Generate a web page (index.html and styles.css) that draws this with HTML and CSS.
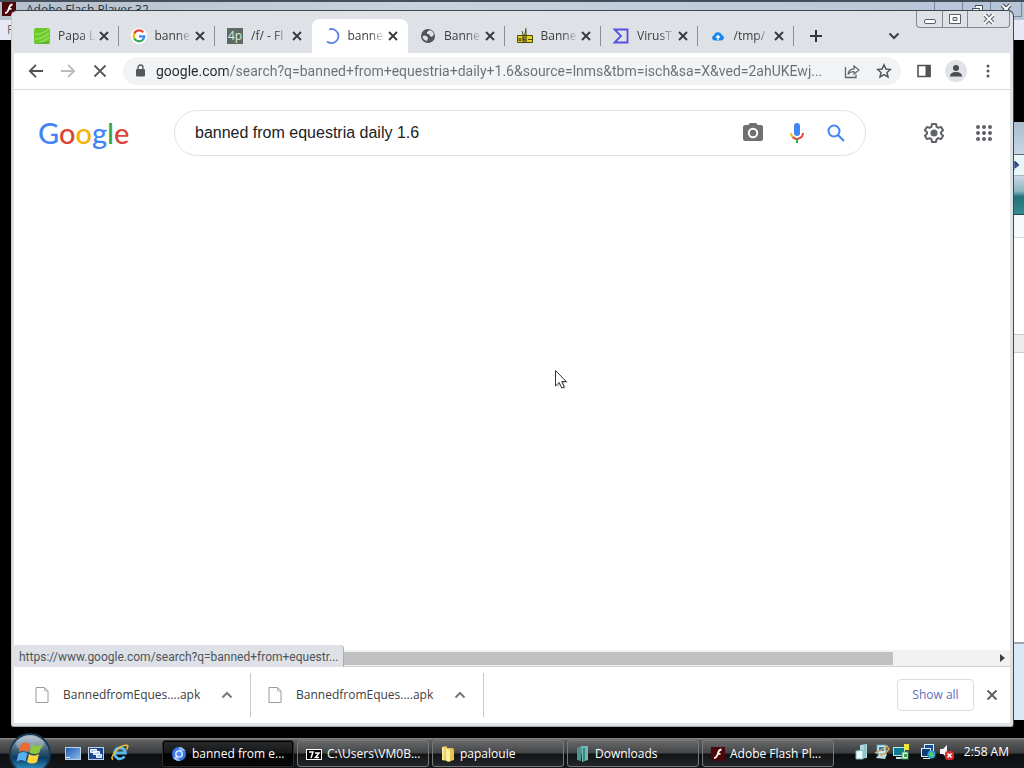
FILE: index.html
```html
<!DOCTYPE html>
<html lang="en">
<head>
<meta charset="utf-8">
<title>Desktop</title>
<link rel="stylesheet" href="styles.css">
</head>
<body>
<svg class="defs" aria-hidden="true">
  <defs>
    <linearGradient id="orb" x1="0" y1="0" x2="0" y2="1"><stop offset="0" stop-color="#a9bccb"/><stop offset=".45" stop-color="#35546c"/><stop offset=".6" stop-color="#0d3c63"/><stop offset="1" stop-color="#35b4e6"/></linearGradient>
    <linearGradient id="screen" x1="0" y1="0" x2="1" y2="1"><stop offset="0" stop-color="#1f55b0"/><stop offset="1" stop-color="#8cc0ef"/></linearGradient>
    <linearGradient id="folder" x1="0" y1="0" x2="1" y2="0"><stop offset="0" stop-color="#fff3a8"/><stop offset="1" stop-color="#dcb93c"/></linearGradient>
    <symbol id="close" viewBox="0 0 16 16"><path d="M4 4l8 8M12 4l-8 8" stroke="currentColor" stroke-width="1.8" fill="none"/></symbol>
    <symbol id="up" viewBox="0 0 16 16"><path d="M3.5 10.5L8 6l4.500 4.500" stroke="currentColor" stroke-width="2" fill="none"/></symbol>
    <symbol id="file" viewBox="0 0 16 18"><path d="M2 1.500h8.500l3.500 3.500v11.500H2z" fill="#fff" stroke="#9a9a9a"/><path d="M10.500 1.500v3.500H14" fill="none" stroke="#b5b5b5"/></symbol>
    <symbol id="flash" viewBox="0 0 14 14"><rect width="14" height="14" fill="#4a0609"/><path d="M10.500 2.500C7.500 2.500 7.500 5 6.700 7S5.500 11 3 11M6.500 6.800h3" stroke="#fff" stroke-width="1.800" fill="none"/></symbol>
  </defs>
</svg>

<div class="desktop">
  <main class="workspace">
    <section class="flash-window" aria-label="Adobe Flash Player 32">
      <div class="flash-title">
        <svg width="14" height="14"><use href="#flash"/></svg>
        <span class="flash-name">Adobe Flash Player 32</span>
        <span class="flash-buttons"><button aria-label="Minimize flash">
          <svg width="14" height="12"><rect x="2.500" y="7.500" width="9" height="3" fill="#fff" stroke="#444b55"/></svg></button><button aria-label="Restore flash">
          <svg width="14" height="12"><path d="M5.500 4V2.500h7v5H10M2.500 5.500h7v5h-7z" fill="#fff" stroke="#444b55"/></svg></button><button class="wide" aria-label="Close flash">
          <svg width="14" height="12"><path d="M3 2l8 8M11 2l-8 8" stroke="#444b55" stroke-width="4"/><path d="M3 2l8 8M11 2l-8 8" stroke="#fff" stroke-width="2"/></svg></button></span>
      </div>
      <div class="flash-menu">File</div>
    </section>

    <section class="explorer-window" aria-label="Downloads">
      <div class="ex-title"></div>
      <div class="ex-nav"><svg width="8" height="12"><path d="M0 3v8M0 4h3M1 2l4 4-4 3z" stroke="#34508f" fill="#34508f"/></svg></div>
      <div class="ex-teal"></div>
      <div class="ex-header"></div>
      <div class="ex-body"></div>
      <div class="ex-rule"></div>
      <div class="ex-list"></div>
      <div class="ex-details"></div>
    </section>

    <section class="browser" aria-label="Browser">
      <div class="window-buttons">
        <button aria-label="Minimize"><svg width="14" height="14"><rect x="1.500" y="7.500" width="11" height="4" rx="1.500" fill="#fff" stroke="#5a5e66"/></svg></button>
        <button aria-label="Maximize"><svg width="14" height="14"><path d="M1.500 2.500h11v9h-11zM5 5.500h4v3H5z" fill="#fff" fill-rule="evenodd" stroke="#5a5e66"/></svg></button>
        <button class="wide" aria-label="Close"><svg width="14" height="14"><path d="M3 3l8 8M11 3l-8 8" stroke="#5a5e66" stroke-width="4"/><path d="M2.500 2.500l9 9M11.500 2.500l-9 9" stroke="#fff" stroke-width="2"/></svg></button>
      </div>

      <div class="tabstrip">
        <div class="tabs">
          <div class="tab"><svg width="16" height="16"><rect width="16" height="16" rx="2" fill="#6cc92c"/><path d="M1 6q6 1 14-5M1 11q8 0 14-6M2 15q8-1 13-6" stroke="#98e05b" stroke-width="1.500" fill="none"/><path d="M1 15h14" stroke="#4da31a"/></svg><span class="label">Papa L</span><button aria-label="Close Papa Louie"><svg width="16" height="16"><use href="#close"/></svg></button></div>
          <div class="tab"><svg width="16" height="16"><circle cx="8" cy="8" r="8" fill="#fff"/><g fill="none" stroke-width="2.300"><path d="M12.200 4.200A5.300 5.300 0 0 0 3.300 5.500" stroke="#ea4335"/><path d="M3.300 5.500a5.300 5.300 0 0 0 0 5" stroke="#fbbc05"/><path d="M3.300 10.500a5.300 5.300 0 0 0 8.200 1.500" stroke="#34a853"/><path d="M11.500 12a5.300 5.300 0 0 0 1.800-3.700H8" stroke="#4285f4"/></g></svg><span class="label">banne</span><button aria-label="Close banned search"><svg width="16" height="16"><use href="#close"/></svg></button></div>
          <div class="tab no-rule"><span class="fourplebs">4p</span><span class="label">/f/ - Fl</span><button aria-label="Close /f/"><svg width="16" height="16"><use href="#close"/></svg></button></div>
          <div class="tab active"><svg width="16" height="16"><path d="M5 1.500a7 7 0 1 1-2 12" fill="none" stroke="#5f85dc" stroke-width="1.800"/></svg><span class="label">banne</span><button aria-label="Close current tab"><svg width="16" height="16"><use href="#close"/></svg></button></div>
          <div class="tab"><svg width="16" height="16"><circle cx="8" cy="8" r="7" fill="#50545a"/><path d="M2.500 8.500Q4 7 6 8t2 2l-1 3q-4-1-4.500-4.500zM7 4l3-2q3 1 4 4l-2 3-2-1-1-2-2 0z" fill="#dfe2e7"/></svg><span class="label">Banne</span><button aria-label="Close Banned"><svg width="16" height="16"><use href="#close"/></svg></button></div>
          <div class="tab"><svg width="16" height="16"><path d="M6 6L5 3M8 6l1-6M9 6V2" stroke="#4b4b24" fill="none"/><rect y="7" width="16" height="8" fill="#e3d51b"/><rect x="5" y="6" width="5" height="9" fill="#8b841d"/><path d="M.5 7.500h15v7H.5zM2 10.500h2v2H2zM11 11.500h4M6.500 9v3h3" stroke="#4d4812" fill="none"/></svg><span class="label">Banne</span><button aria-label="Close Banned page"><svg width="16" height="16"><use href="#close"/></svg></button></div>
          <div class="tab"><svg width="16" height="16"><path d="M1.500 1.500h13v13h-13L8 8z" fill="none" stroke="#5553dd" stroke-width="1.800"/></svg><span class="label">VirusT</span><button aria-label="Close VirusTotal"><svg width="16" height="16"><use href="#close"/></svg></button></div>
          <div class="tab"><svg width="16" height="16"><path d="M4.500 12.500a2.700 2.700 0 0 1-.4-5.300 4 4 0 0 1 7.700-.2 2.800 2.800 0 0 1-.3 5.500z" fill="#1688ee"/><path d="M8 12V8M6.200 9.500L8 7.700l1.800 1.800" stroke="#fff" stroke-width="1.300" fill="none"/></svg><span class="label">/tmp/</span><button aria-label="Close /tmp/"><svg width="16" height="16"><use href="#close"/></svg></button></div>
        </div>
        <button class="new-tab" aria-label="New tab"><svg width="16" height="16"><path d="M8 2v12M2 8h12" stroke="#33363a" stroke-width="2"/></svg></button>
        <button class="tab-search" aria-label="Search tabs"><svg width="16" height="16"><path d="M3.500 5.500L8 10l4.500-4.500" stroke="#3c4043" stroke-width="2" fill="none"/></svg></button>
      </div>

      <div class="toolbar">
        <button aria-label="Back"><svg width="16" height="16"><path d="M15 8H2.500M8 1.800L1.800 8 8 14.200" stroke="#4e5256" stroke-width="1.800" fill="none"/></svg></button>
        <button aria-label="Forward"><svg width="16" height="16"><path d="M1 8h12.500M8 1.800L14.200 8 8 14.200" stroke="#b9bbbe" stroke-width="1.800" fill="none"/></svg></button>
        <button aria-label="Stop"><svg width="16" height="16"><path d="M2.500 2.500l11 11M13.500 2.500l-11 11" stroke="#54585c" stroke-width="1.800"/></svg></button>
        <div class="omnibox">
          <svg width="16" height="16"><rect x="4" y="6" width="9" height="7.500" rx="1" fill="#55585c"/><path d="M6 6.500V4.500a2.500 2.500 0 0 1 5 0v2" fill="none" stroke="#55585c" stroke-width="1.300"/></svg>
          <input class="url" aria-label="Address" value="google.com/search?q=banned+from+equestria+daily+1.6&amp;source=lnms&amp;tbm=isch&amp;sa=X&amp;ved=2ahUKEwj...">
          <button aria-label="Share"><svg width="16" height="16"><path d="M1.500 4v10.500h10.500v-3" fill="none" stroke="#62666a" stroke-width="1.300"/><path d="M4 11.500q.5-5.500 6-5.700V3l5 4-5 4V8.500Q6 8.500 4 11.500z" fill="none" stroke="#62666a" stroke-width="1.200"/></svg></button>
          <button aria-label="Bookmark"><svg width="16" height="16"><path d="M8 1.800l1.900 4.200 4.500.5-3.400 3 1 4.500L8 11.700 4 14l1-4.500-3.400-3 4.500-.5z" fill="none" stroke="#53575b" stroke-width="1.500"/></svg></button>
        </div>
        <button aria-label="Side panel"><svg width="16" height="16"><path d="M2 2.500h12v11H2z" fill="#fff" stroke="#4e5256" stroke-width="1.600"/><path d="M9.500 2h5v12h-5z" fill="#4e5256"/></svg></button>
        <button aria-label="Profile"><svg width="22" height="22"><circle cx="11" cy="11" r="11" fill="#dfe2e7"/><circle cx="11" cy="8" r="3" fill="#484c51"/><path d="M5 16.500q0-4.500 6-4.500t6 4.500z" fill="#484c51"/></svg></button>
        <button aria-label="Menu"><svg width="16" height="16" fill="#53575b"><circle cx="8" cy="3" r="1.500"/><circle cx="8" cy="8" r="1.500"/><circle cx="8" cy="13" r="1.500"/></svg></button>
      </div>

      <div class="page">
        <header class="google-bar">
          <a class="logo" href="#" aria-label="Google"><span class="b">G</span><span class="r">o</span><span class="y">o</span><span class="b">g</span><span class="g">l</span><span class="r">e</span></a>
          <form class="searchbox">
            <input type="text" aria-label="Search" value="banned from equestria daily 1.6">
            <div class="media">
              <button type="button" aria-label="Search by image"><svg width="24" height="24"><path d="M9 2L7.200 4H4a2 2 0 0 0-2 2v12a2 2 0 0 0 2 2h16a2 2 0 0 0 2-2V6a2 2 0 0 0-2-2h-3.200L15 2z" fill="#707070"/><circle cx="12" cy="12" r="4.200" fill="none" stroke="#fff" stroke-width="2"/></svg></button>
              <button type="button" aria-label="Search by voice"><svg width="24" height="24"><rect x="9" y="2" width="6" height="13" rx="3" fill="#4285f4"/><path d="M6 12a6 6 0 0 0 1.700 4" fill="none" stroke="#fbbc05" stroke-width="2"/><path d="M7.700 16A6 6 0 0 0 18 12" fill="none" stroke="#ea4335" stroke-width="2"/><path d="M12 18v4" stroke="#34a853" stroke-width="2"/></svg></button>
            </div>
            <button type="button" aria-label="Google Search"><svg width="24" height="24"><circle cx="10" cy="10" r="5.500" fill="none" stroke="#4285f4" stroke-width="2"/><path d="M14 14l6 6" stroke="#4285f4" stroke-width="2.200"/></svg></button>
          </form>
          <div class="account">
            <button aria-label="Settings"><svg width="24" height="24"><path d="M10 3h4l.6 2.800 1.800 1 2.700-.9 2 3.400-2.100 1.900v1.600l2.100 1.900-2 3.400-2.700-.9-1.800 1L14 21h-4l-.6-2.800-1.800-1-2.700.9-2-3.400L5 12.800v-1.600L2.900 9.300l2-3.400 2.700.9 1.800-1z" fill="none" stroke="#5f6368" stroke-width="2" stroke-linejoin="round"/><circle cx="12" cy="12" r="3.500" fill="#5f6368"/></svg></button>
            <button aria-label="Google apps"><svg width="24" height="24" fill="#5f6368"><circle cx="6" cy="6" r="2"/><circle cx="12" cy="6" r="2"/><circle cx="18" cy="6" r="2"/><circle cx="6" cy="12" r="2"/><circle cx="12" cy="12" r="2"/><circle cx="18" cy="12" r="2"/><circle cx="6" cy="18" r="2"/><circle cx="12" cy="18" r="2"/><circle cx="18" cy="18" r="2"/></svg></button>
          </div>
        </header>
        <div class="status">https://www.google.com/search?q=banned+from+equestr...</div>
      </div>
      <div class="scrollbar"><div class="thumb"></div><svg width="16" height="16"><path d="M6 4l5 4-5 4z" fill="#404040"/></svg></div>

      <div class="downloads">
        <div class="download"><svg width="16" height="18"><use href="#file"/></svg><span>BannedfromEques....apk</span><button aria-label="Options for first file"><svg width="16" height="16"><use href="#up"/></svg></button></div>
        <div class="download"><svg width="16" height="18"><use href="#file"/></svg><span>BannedfromEques....apk</span><button aria-label="Options for second file"><svg width="16" height="16"><use href="#up"/></svg></button></div>
        <button class="show-all">Show all</button>
        <button class="dismiss" aria-label="Close downloads"><svg width="16" height="16"><path d="M3.500 3.500l9 9M12.500 3.500l-9 9" stroke="#606468" stroke-width="2"/></svg></button>
      </div>
    </section>

    <svg class="cursor" width="16" height="22"><path d="M3.500 3.500v15l3.700-3.500 2.500 5 2.500-1-2.500-5h5z" fill="#999" opacity=".5"/><path d="M1.500 1.500v15.500l3.700-3.500 2.500 5.500 2.500-1-2.500-5.500h4.500z" fill="#fff" stroke="#333"/></svg>
  </main>

  <footer class="taskbar">
    <button class="start" aria-label="Start"><svg width="42" height="42"><circle cx="21" cy="21" r="20" fill="url(#orb)" stroke="#18384f" stroke-width="2"/><ellipse cx="21" cy="11" rx="14" ry="8" fill="#fff" opacity=".25"/><path d="M12 11q4-3 9 0l-2 8q-4-3-9 0z" fill="#ed6a32"/><path d="M22.500 11.500q5 3 10 0l-2 8q-5 3-10 0z" fill="#8cc83c"/><path d="M9.500 20.500q5-3 9 0l-2 8q-4-3-9 0z" fill="#56b0ee"/><path d="M20 21q5 3 10 0l-2 8q-5 3-10 0z" fill="#ffd53c"/></svg></button>
    <div class="quick">
      <button aria-label="Show desktop"><svg width="16" height="16"><rect x=".5" y="2.500" width="15" height="12" fill="url(#screen)" stroke="#b9d0e6"/><path d="M1 12.500h4" stroke="#e8f4ff"/></svg></button>
      <button aria-label="Switch windows"><svg width="16" height="16"><rect x=".5" y="2.500" width="15" height="12" fill="#1c478f" stroke="#b9d0e6"/><path d="M2.500 4.500h6v3h-6zM5.500 6.500h6v3h-6zM8.500 9.500h5v3h-5z" fill="#a8ccf4" stroke="#f4faff"/></svg></button>
      <button aria-label="Internet Explorer"><svg width="18" height="18"><path d="M13.500 12.500A5.500 5.500 0 1 1 14.500 9H4" fill="none" stroke="#58baf0" stroke-width="2.800"/><path d="M2 15.500Q-1 14 5 7T16.500 1.500q1 1-1 4" fill="none" stroke="#f2c32d" stroke-width="1.500"/></svg></button>
    </div>
    <nav class="tasks">
      <button class="task current"><svg width="16" height="16"><circle cx="8" cy="8" r="7" fill="#3b78e7"/><path d="M8 1a7 7 0 0 1 6.200 4H8z" fill="#8eb7fa"/><path d="M2 12l3-2 4 4.900A7 7 0 0 1 2 12z" fill="#a3c5fc"/><circle cx="8" cy="8" r="3.200" fill="#4b8af5" stroke="#e8f1ff" stroke-width="1.300"/></svg><span>banned from e...</span></button>
      <button class="task"><svg width="16" height="16"><rect x=".5" y="3.500" width="15" height="10" fill="#000" stroke="#fff"/><path d="M3 6h4l-2 6M9 7h4l-3.500 4.500H13" fill="none" stroke="#fff" stroke-width="1.500"/></svg><span>C:\Users\VM0B...</span></button>
      <button class="task"><svg width="14" height="16"><path d="M1 1l5-1v15l-5-1z" fill="url(#folder)"/><path d="M6 2h6l1 2v10l-7 2z" fill="#e2c34d"/><path d="M5 2l4 2v12l-4-2z" fill="#fff0a0"/></svg><span>papalouie</span></button>
      <button class="task"><svg width="14" height="16"><path d="M1 2l4-2v15l-4-1z" fill="#4d9491"/><path d="M5 0h7v14l-6 2z" fill="#75b8b3"/><path d="M8 2v13" stroke="#3e8582" stroke-width="2"/></svg><span>Downloads</span></button>
      <button class="task"><svg width="14" height="14"><use href="#flash"/></svg><span>Adobe Flash Pl...</span></button>
    </nav>
    <div class="tray">
      <svg width="16" height="16"><path d="M5 1l7-1v14l-7 1z" fill="#a9d9dc"/><path d="M1 7l7-1v9H1z" fill="#eefafa" stroke="#7bb5bb"/><path d="M10 1v13" stroke="#6faeb5"/></svg>
      <svg width="16" height="16"><rect x="3" y="1" width="9" height="9" fill="#d0edf2" stroke="#5a9dac"/><rect x="5" y="3" width="5" height="4" fill="#277aa8"/><path d="M2 14l3-4h8l-2 5z" fill="#b9e0e2"/><path d="M1 9Q7 7 13 2l2 3q-4 6-9 6" fill="none" stroke="#d5a75c" stroke-width="1.500"/></svg>
      <svg width="16" height="16"><rect x=".5" y="3.500" width="11" height="8" fill="#087c91" stroke="#b9e9ed"/><path d="M3 14h7" stroke="#bde8e8" stroke-width="2"/><rect x="11" width="5" height="6" fill="#ede63a"/><rect x="9" y="8" width="6" height="7" fill="#e6f5ec" stroke="#3b9b5b"/><rect x="11" y="10" width="3" height="3" fill="#30a042"/></svg>
      <svg class="network" width="16" height="16"><rect x="4.500" y=".5" width="9" height="8" fill="#174c8e" stroke="#d5f1ff"/><rect x="1.500" y="4.500" width="9" height="8" fill="#123c75" stroke="#d5f1ff"/><path d="M3 14.500h7" stroke="#d5f1ff"/><circle cx="11.500" cy="10.500" r="4" fill="#2aa2d0"/><path d="M9 9l3-1 2 3-3 3z" fill="#5dcc61"/></svg>
      <svg width="16" height="16"><path d="M1 5h3l4-4v13l-4-4H1z" fill="#f5f5f5"/><rect x="6" y="7" width="9" height="9" rx="3" fill="#da2b2b"/><path d="M8.500 9.500l4 4M12.500 9.500l-4 4" stroke="#fff" stroke-width="1.500"/></svg>
      <time>2:58 AM</time>
    </div>
  </footer>
</div>
</body>
</html>
```
FILE: styles.css
```css
* { box-sizing: border-box; }
html, body { height: 100%; margin: 0; }
body { background: #000; font: 12px/16px "Open Sans", "Noto Sans", sans-serif; color: #3c4043; overflow: hidden; }
button { display: flex; align-items: center; justify-content: center; flex: none; padding: 0; border: 0; background: none; color: inherit; font: inherit; }
input { min-width: 0; padding: 0; border: 0; outline: 0; background: none; }
svg { display: block; flex: none; }
.defs { position: absolute; width: 0; height: 0; }
.desktop { height: 100vh; display: flex; flex-direction: column; }
.workspace { position: relative; flex: 1; min-height: 0; }

/* windows behind the browser */
.flash-window { position: absolute; top: 0; left: 0; right: 0; background: #e4e9f3; border-top: 2px solid #454f5c; }
.flash-title { display: flex; gap: 10px; height: 18px; padding-left: 2px; background: linear-gradient(90deg, #b4c0cc, #c8d2dc 40%, #b5c5d8); }
.flash-name { flex: 1; color: #29323e; }
.flash-buttons { display: flex; height: 15px; padding-right: 2px; }
.flash-buttons button { width: 29px; border: 1px solid #7b8796; border-top: 0; margin-left: -1px; }
.flash-buttons .wide { width: 32px; }
.flash-menu { height: 20px; padding: 2px 7px; color: #666; }
.explorer-window { position: absolute; top: 122px; right: 0; bottom: 18px; width: 12px; display: flex; flex-direction: column; background: #fff; }
.ex-title { height: 33px; background: linear-gradient(#aabdce, #c7d6e3); border-bottom: 1px solid #5c6a78; }
.ex-nav { height: 21px; padding: 4px 0 0 2px; background: #e8f6fa; border-bottom: 1px solid #9bb; }
.ex-teal { height: 39px; background: linear-gradient(#c9d7e6, #86b7c0 40%, #22727b 55%, #358b90); border-bottom: 1px solid #124b50; }
.ex-header { height: 23px; background: #f4faf9; border-bottom: 1px solid #cde0e0; }
.ex-body { height: 96px; }
.ex-rule { height: 19px; background: #ececec; border: solid #ccc; border-width: 1px 0; }
.ex-list { flex: 1; }
.ex-details { height: 78px; background: #d9e9f5; border-top: 2px solid #9aa8b4; }

/* browser frame */
.browser { position: absolute; top: 10px; left: 11px; right: 10px; bottom: 11px; display: flex; flex-direction: column; border: 1px solid #3e4651; border-left-color: #c4c7cc; border-bottom-color: #a5a8ac; border-radius: 6px 6px 3px 3px; padding: 0 3px 3px 2px; background: #dee1e6; }
.window-buttons { position: absolute; top: 0; right: 3px; display: flex; height: 17px; border: 1px solid #858991; border-top: 0; border-radius: 0 0 4px 4px; }
.window-buttons button { width: 25px; }
.window-buttons button + button { border-left: 1px solid #858991; }
.window-buttons .wide { width: 42px; }
.tabstrip { display: flex; align-items: flex-end; height: 42px; padding-left: 8px; }
.tabs { display: flex; flex: 1; max-width: 772px; height: 34px; }
.tab { display: flex; align-items: center; flex: 1; min-width: 0; padding: 0 7px 0 12px; position: relative; }
.tab .label { flex: 1; min-width: 0; margin-left: 8px; overflow: hidden; white-space: nowrap; -webkit-mask-image: linear-gradient(90deg, #000 60%, transparent); mask-image: linear-gradient(90deg, #000 60%, transparent); }
.tab button { color: #35383c; }
.tab::after { content: ""; position: absolute; right: 0; top: 7px; height: 20px; width: 1px; background: #8a8d92; }
.tab.active { background: #fff; border-radius: 8px 8px 0 0; }
.tab.active::after, .tab.no-rule::after { display: none; }
.fourplebs { flex: none; width: 16px; height: 16px; background: #5b6b62; color: #dcebdd; line-height: 16px; text-align: center; }
.new-tab { width: 28px; height: 34px; margin-left: 8px; }
.tab-search { width: 28px; height: 34px; margin-left: auto; margin-right: 102px; }
.toolbar { display: flex; align-items: center; gap: 4px; height: 37px; padding: 0 8px; background: #fff; border-bottom: 1px solid #d6d8db; }
.toolbar > button { width: 28px; height: 28px; }
.omnibox { flex: 1; min-width: 0; display: flex; align-items: center; height: 28px; margin: 0 5px; padding: 0 9px; border-radius: 14px; background: #f1f3f4; }
.url { flex: 1; height: 24px; margin-left: 8px; font: 14px/24px Roboto, "Open Sans", sans-serif; color: transparent; background: linear-gradient(90deg, #25282c 72px, #6b6f74 72px); -webkit-background-clip: text; background-clip: text; }
.omnibox button { width: 16px; margin-left: 16px; }
.omnibox .url + button { margin-left: 8px; }

/* search page */
.page { position: relative; flex: 1; min-height: 0; background: #fff; }
.google-bar { display: flex; align-items: center; padding: 20px 14px 0 24px; }
.logo { width: 136px; flex: none; font: 500 29px/40px Lato, sans-serif; text-decoration: none; }
.b { color: #4285f4; } .r { color: #db4437; } .y { color: #f4b400; } .g { color: #34a853; }
.searchbox { flex: 1; display: flex; align-items: center; gap: 15px; height: 46px; padding: 0 17px 0 20px; border: 1px solid #dfe1e5; border-radius: 23px; }
.searchbox input { flex: 1; height: 32px; font: 16px/32px "Liberation Sans", Arial, sans-serif; color: #202124; }
.media { display: flex; gap: 20px; }
.account { display: flex; gap: 26px; margin-left: 56px; }
.status { position: absolute; left: 0; bottom: -17px; z-index: 1; padding: 4px 5px 2px; border-right: 1px solid #aaaeb4; border-radius: 0 4px 0 0; background: #dee1e6; color: #50545a; font-family: Roboto, "Open Sans", sans-serif; }
.scrollbar { display: flex; align-items: center; height: 17px; background: #f1f1f1; border-bottom: 1px solid #d0d2d4; }
.thumb { height: 13px; flex: 0 0 88.3%; margin-right: auto; background: #c1c1c1; }

/* downloads shelf */
.downloads { display: flex; align-items: center; height: 56px; padding: 0 10px 0 4px; background: #fff; }
.download { display: flex; align-items: center; width: 233px; height: 44px; padding: 0 15px 0 16px; border-right: 1px solid #c8cacd; }
.download span { flex: 1; margin-left: 13px; white-space: nowrap; }
.download button { color: #75797e; }
.show-all { width: 77px; height: 32px; margin-left: auto; border: 1px solid #dadce0; border-radius: 4px; color: #5b6fc4; }
.dismiss { margin-left: 10px; }
.cursor { position: absolute; left: 554px; top: 369px; }

/* taskbar */
.taskbar { position: relative; display: flex; flex: none; height: 30px; padding-left: 9px; background: linear-gradient(#8d8f91, #5c5e60 8%, #3b3d3f 50%, #0c0d0e 54%, #15171a); color: #fff; }
.start { width: 42px; height: 42px; margin-top: -5px; }
.quick { display: flex; align-items: center; gap: 7px; margin-left: 14px; width: 97px; }
.tasks { flex: 1; display: flex; gap: 3px; padding: 2px 0 1px; min-width: 0; }
.task { flex: 1; max-width: 132px; justify-content: flex-start; gap: 5px; padding: 0 8px; border: 1px solid #77797b; border-radius: 3px; background: linear-gradient(#66686a, #434547 48%, #121315 52%, #24272a); white-space: nowrap; }
.task.current { border-color: #2e2f31; box-shadow: inset 0 0 0 1px #000; background: linear-gradient(#292a2b, #161718 48%, #000 52%, #0a0b0c); }
.tray { display: flex; align-items: center; flex: none; gap: 3px; padding: 0 15px 3px 20px; }
.network { margin-left: 8px; }
.tray time { margin-left: 6px; }
```
